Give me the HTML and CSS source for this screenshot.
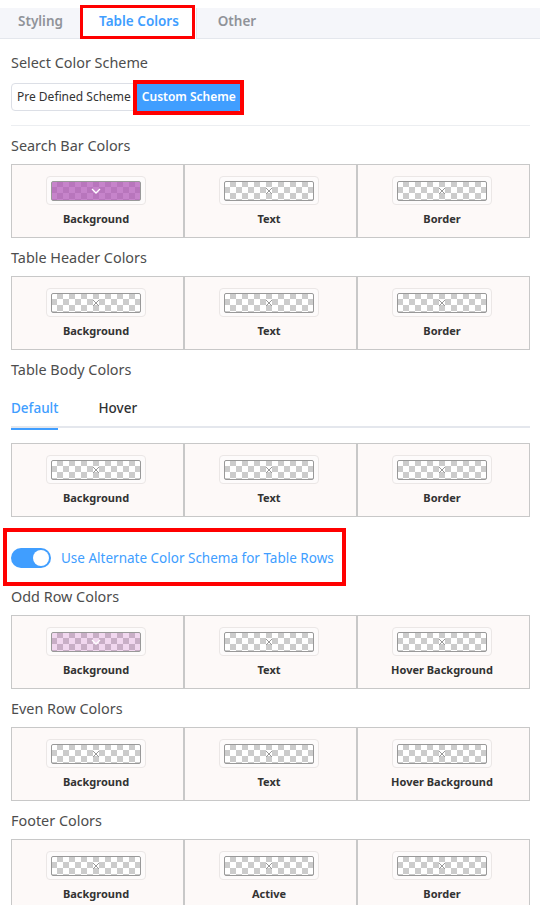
FILE: index.html
```html
<!DOCTYPE html>
<html>
<head>
<meta charset="utf-8">
<link rel="stylesheet" href="styles.css">
</head>
<body>
<div class="tabs">
  <div class="tab">Styling</div>
  <div class="tab active mark mark-tab">Table Colors</div>
  <div class="tab">Other</div>
</div>
<div class="content">
  <div class="heading">Select Color Scheme</div>
  <div class="scheme">
    <span class="seg">Pre Defined Scheme</span>
    <span class="seg on mark mark-btn">Custom Scheme</span>
  </div>
  <div class="sep"></div>

  <div class="heading">Search Bar Colors</div>
  <div class="grid">
    <div class="cell"><div class="picker"><span class="swatch purple"><svg class="chev" viewBox="0 0 10 6"><path d="M1 1l4 4 4-4" fill="none" stroke="#fff" stroke-width="1.3"/></svg></span></div><div class="label">Background</div></div>
    <div class="cell"><div class="picker"><span class="swatch"><svg class="x" viewBox="0 0 8 8"><path d="M1 1l6 6M7 1l-6 6" stroke="#999" stroke-width="1"/></svg></span></div><div class="label">Text</div></div>
    <div class="cell"><div class="picker"><span class="swatch"><svg class="x" viewBox="0 0 8 8"><path d="M1 1l6 6M7 1l-6 6" stroke="#999" stroke-width="1"/></svg></span></div><div class="label">Border</div></div>
  </div>

  <div class="heading">Table Header Colors</div>
  <div class="grid">
    <div class="cell"><div class="picker"><span class="swatch"><svg class="x" viewBox="0 0 8 8"><path d="M1 1l6 6M7 1l-6 6" stroke="#999" stroke-width="1"/></svg></span></div><div class="label">Background</div></div>
    <div class="cell"><div class="picker"><span class="swatch"><svg class="x" viewBox="0 0 8 8"><path d="M1 1l6 6M7 1l-6 6" stroke="#999" stroke-width="1"/></svg></span></div><div class="label">Text</div></div>
    <div class="cell"><div class="picker"><span class="swatch"><svg class="x" viewBox="0 0 8 8"><path d="M1 1l6 6M7 1l-6 6" stroke="#999" stroke-width="1"/></svg></span></div><div class="label">Border</div></div>
  </div>

  <div class="heading">Table Body Colors</div>
  <div class="subtabs">
    <span class="subtab on">Default</span>
    <span class="subtab">Hover</span>
  </div>
  <div class="grid after-tabs">
    <div class="cell"><div class="picker"><span class="swatch"><svg class="x" viewBox="0 0 8 8"><path d="M1 1l6 6M7 1l-6 6" stroke="#999" stroke-width="1"/></svg></span></div><div class="label">Background</div></div>
    <div class="cell"><div class="picker"><span class="swatch"><svg class="x" viewBox="0 0 8 8"><path d="M1 1l6 6M7 1l-6 6" stroke="#999" stroke-width="1"/></svg></span></div><div class="label">Text</div></div>
    <div class="cell"><div class="picker"><span class="swatch"><svg class="x" viewBox="0 0 8 8"><path d="M1 1l6 6M7 1l-6 6" stroke="#999" stroke-width="1"/></svg></span></div><div class="label">Border</div></div>
  </div>

  <div class="toggle-wrap">
    <div class="toggle-row mark mark-toggle">
      <span class="switch"><span class="knob"></span></span>
      <span class="toggle-text">Use Alternate Color Schema for Table Rows</span>
    </div>
  </div>

  <div class="heading">Odd Row Colors</div>
  <div class="grid">
    <div class="cell"><div class="picker"><span class="swatch pink"><svg class="chev" viewBox="0 0 10 6"><path d="M1 1l4 4 4-4" fill="none" stroke="#fff" stroke-width="1.3"/></svg></span></div><div class="label">Background</div></div>
    <div class="cell"><div class="picker"><span class="swatch"><svg class="x" viewBox="0 0 8 8"><path d="M1 1l6 6M7 1l-6 6" stroke="#999" stroke-width="1"/></svg></span></div><div class="label">Text</div></div>
    <div class="cell"><div class="picker"><span class="swatch"><svg class="x" viewBox="0 0 8 8"><path d="M1 1l6 6M7 1l-6 6" stroke="#999" stroke-width="1"/></svg></span></div><div class="label">Hover Background</div></div>
  </div>

  <div class="heading">Even Row Colors</div>
  <div class="grid">
    <div class="cell"><div class="picker"><span class="swatch"><svg class="x" viewBox="0 0 8 8"><path d="M1 1l6 6M7 1l-6 6" stroke="#999" stroke-width="1"/></svg></span></div><div class="label">Background</div></div>
    <div class="cell"><div class="picker"><span class="swatch"><svg class="x" viewBox="0 0 8 8"><path d="M1 1l6 6M7 1l-6 6" stroke="#999" stroke-width="1"/></svg></span></div><div class="label">Text</div></div>
    <div class="cell"><div class="picker"><span class="swatch"><svg class="x" viewBox="0 0 8 8"><path d="M1 1l6 6M7 1l-6 6" stroke="#999" stroke-width="1"/></svg></span></div><div class="label">Hover Background</div></div>
  </div>

  <div class="heading">Footer Colors</div>
  <div class="grid">
    <div class="cell"><div class="picker"><span class="swatch"><svg class="x" viewBox="0 0 8 8"><path d="M1 1l6 6M7 1l-6 6" stroke="#999" stroke-width="1"/></svg></span></div><div class="label">Background</div></div>
    <div class="cell"><div class="picker"><span class="swatch"><svg class="x" viewBox="0 0 8 8"><path d="M1 1l6 6M7 1l-6 6" stroke="#999" stroke-width="1"/></svg></span></div><div class="label">Active</div></div>
    <div class="cell"><div class="picker"><span class="swatch"><svg class="x" viewBox="0 0 8 8"><path d="M1 1l6 6M7 1l-6 6" stroke="#999" stroke-width="1"/></svg></span></div><div class="label">Border</div></div>
  </div>
</div>
</body>
</html>
```

FILE: styles.css
```css
* { box-sizing: border-box; }
html, body { margin: 0; padding: 0; background: #fff; }
body {
  font-family: "Noto Sans", "Open Sans", sans-serif;
  color: #555;
  overflow: hidden;
}

.tabs {
  margin-top: 8px;
  height: 31px;
  display: flex;
  background: #f5f6fa;
  border-bottom: 1px solid #e4e7ed;
}
.tab {
  height: 30px;
  line-height: 26px;
  font-size: 13.5px;
  font-weight: 600;
  color: #909399;
  text-align: center;
}
.tab:nth-child(1) { width: 81px; }
.tab:nth-child(2) { width: 116px; }
.tab:nth-child(3) { width: 80px; }
.tab.active {
  height: 31px;
  background: #fff;
  color: #409eff;
  border-left: 1px solid #e4e7ed;
  border-right: 1px solid #e4e7ed;
}

.mark { position: relative; }
.mark::after {
  content: "";
  position: absolute;
  border: 3px solid #f00;
  pointer-events: none;
}
.mark-tab::after { left: -2px; right: 1px; top: -3px; bottom: 0; }
.mark-btn::after { left: -4px; right: -3px; top: -4px; bottom: -5px; border-width: 4px; }
.mark-toggle::after { left: -8px; right: -12px; top: -20px; bottom: -18px; border-width: 4px; }

.content { padding: 0 10px 0 11px; }

.heading {
  font-size: 14.4px;
  line-height: 20px;
  color: #4d4d4d;
  margin: 10px 0 8px;
}
.content > .heading:first-child { margin-top: 14px; }

.scheme { display: flex; margin-top: 10px; }
.seg {
  height: 28px;
  line-height: 26px;
  font-size: 12px;
  padding: 0 4px 0 5px;
  border: 1px solid #dcdfe6;
  border-radius: 4px 0 0 4px;
  color: #333;
  background: #fff;
}
.seg.on {
  background: #409eff;
  border-color: #409eff;
  color: #fff;
  font-weight: 600;
  border-radius: 0 4px 4px 0;
  padding: 0 5px;
  margin-left: 0;
}

.sep { height: 1px; background: #eceef1; margin: 14px 0 0; }

.grid {
  display: grid;
  grid-template-columns: repeat(3, 1fr);
}
.grid.after-tabs { margin-top: 15px; }
.cell {
  height: 74px;
  border: 1px solid #c8c8c8;
  background: #fdf9f8;
  display: flex;
  flex-direction: column;
  align-items: center;
  padding-top: 11px;
  padding-right: 3px;
}
.picker {
  width: 100px;
  height: 29px;
  border: 1px solid #ebe7e6;
  border-radius: 4px;
  background: #fdfbfb;
  display: flex;
  align-items: center;
  justify-content: center;
}
.swatch {
  position: relative;
  width: 90px;
  height: 20px;
  border: 1px solid #999;
  border-radius: 2px;
  background-color: #fff;
  background-image: conic-gradient(#ccc 25%, #fff 0 50%, #ccc 0 75%, #fff 0);
  background-size: 12px 12px;
  background-position: -1px -1px;
  display: flex;
  align-items: center;
  justify-content: center;
}
.swatch.purple {
  background-image:
    linear-gradient(rgba(176, 84, 182, 0.72), rgba(176, 84, 182, 0.72)),
    conic-gradient(#ccc 25%, #fff 0 50%, #ccc 0 75%, #fff 0);
  background-size: auto, 12px 12px;
}
.swatch.pink {
  background-image:
    linear-gradient(rgba(185, 55, 175, 0.2), rgba(185, 55, 175, 0.2)),
    conic-gradient(#ccc 25%, #fff 0 50%, #ccc 0 75%, #fff 0);
  background-size: auto, 12px 12px;
}
.x { width: 8px; height: 8px; }
.chev { width: 10px; height: 6px; }

.label {
  margin-top: 6px;
  font-size: 11px;
  font-weight: 700;
  color: #333;
  line-height: 16px;
}

.subtabs {
  display: flex;
  height: 40px;
  margin-top: 8px;
  border-bottom: 2px solid #e4e7ed;
}
.subtab {
  font-size: 13.5px;
  line-height: 40px;
  color: #303133;
  margin-right: 40px;
  font-weight: 500;
}
.subtab.on {
  color: #409eff;
  border-bottom: 2px solid #409eff;
  margin-bottom: -2px;
  height: 42px;
}

.toggle-wrap { padding: 31px 0 6px; }
.toggle-row {
  display: inline-flex;
  align-items: center;
  height: 20px;
}
.switch {
  width: 40px;
  height: 20px;
  border-radius: 10px;
  background: #409eff;
  display: flex;
  align-items: center;
  justify-content: flex-end;
  padding-right: 2px;
}
.knob {
  width: 16px;
  height: 16px;
  border-radius: 50%;
  background: #fff;
}
.toggle-text {
  margin-left: 10px;
  font-size: 13.5px;
  color: #409eff;
}
```
